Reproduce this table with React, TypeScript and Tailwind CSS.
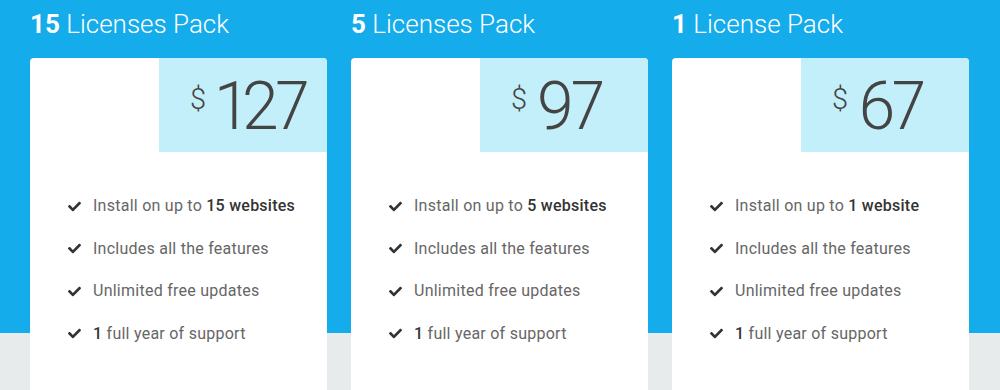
import { FaCheck } from 'react-icons/fa';

type Plan = {
  count: string;
  label: string;
  price: string;
  sites: string;
};

const plans: Plan[] = [
  { count: '15', label: 'Licenses Pack', price: '127', sites: '15 websites' },
  { count: '5', label: 'Licenses Pack', price: '97', sites: '5 websites' },
  { count: '1', label: 'License Pack', price: '67', sites: '1 website' },
];

function Feature({ children }: { children: React.ReactNode }) {
  return (
    <li className="flex h-[42.5px] items-center gap-[12px]">
      <FaCheck className="h-[13px] w-[13px] shrink-0 text-[#333]" />
      <span className="text-[16px] tracking-[0.25px] text-[#666]">{children}</span>
    </li>
  );
}

function PlanColumn({ plan }: { plan: Plan }) {
  return (
    <div className="flex w-[297px] flex-col">
      {/* Title */}
      <div className="h-[59px] pt-[8px] text-[26px] leading-[32px] font-light text-white">
        <span className="font-bold">{plan.count}</span> {plan.label}
      </div>

      {/* Card */}
      <div className="h-[340px] rounded-t-[4px] bg-white">
        <div className="flex justify-end">
          <div className="flex h-[94px] w-[168px] rounded-tr-[4px] bg-[#c3effa] pl-[31px] pt-[14px] text-[#444]">
            <span className="mt-[11px] text-[29px] leading-[32px] font-light">$</span>
            <span className="ml-[10px] text-[66px] leading-[70px] font-light tracking-[-3px] proportional-nums">
              {plan.price}
            </span>
          </div>
        </div>

        {/* Features */}
        <ul className="pl-[38px] pt-[33px]">
          <Feature>
            Install on up to <b className="font-medium text-[#333]">{plan.sites}</b>
          </Feature>
          <Feature>Includes all the features</Feature>
          <Feature>Unlimited free updates</Feature>
          <Feature>
            <b className="font-medium text-[#333]">1</b> full year of support
          </Feature>
        </ul>
      </div>
    </div>
  );
}

export default function App() {
  return (
    <div
      className="flex h-[390px] w-[1000px] gap-[24px] overflow-hidden bg-[linear-gradient(to_bottom,#14acea_333px,#e8ebec_333px)] px-[30px]"
      style={{ fontFamily: 'Roboto, "Liberation Sans", sans-serif' }}
    >
      {plans.map((p) => (
        <PlanColumn key={p.price} plan={p} />
      ))}
    </div>
  );
}
